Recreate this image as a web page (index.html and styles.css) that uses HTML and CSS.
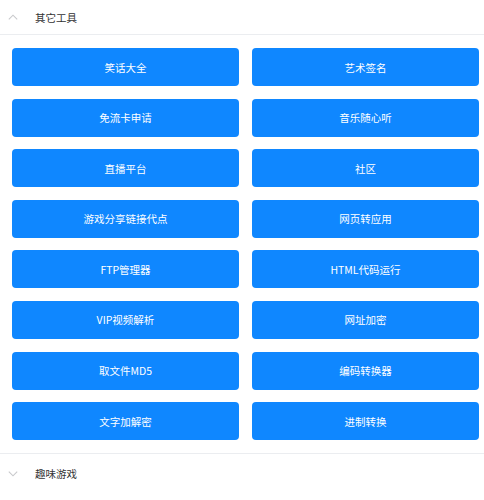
FILE: index.html
```html
<!DOCTYPE html>
<html lang="zh-CN">
<head>
<meta charset="utf-8">
<title>其它工具</title>
<link rel="stylesheet" href="styles.css">
</head>
<body>
<section class="panel">
  <div class="panel-header">
    <svg class="chevron" width="10" height="6" viewBox="0 0 10 6"><path d="M0.8 5.4 L5 1.2 L9.2 5.4" fill="none" stroke="#c8c9cc" stroke-width="1.1"/></svg>
    <span class="panel-title">其它工具</span>
  </div>
  <div class="panel-body">
    <a class="tool-btn">笑话大全</a>
    <a class="tool-btn">艺术签名</a>
    <a class="tool-btn">免流卡申请</a>
    <a class="tool-btn">音乐随心听</a>
    <a class="tool-btn">直播平台</a>
    <a class="tool-btn">社区</a>
    <a class="tool-btn">游戏分享链接代点</a>
    <a class="tool-btn">网页转应用</a>
    <a class="tool-btn">FTP管理器</a>
    <a class="tool-btn">HTML代码运行</a>
    <a class="tool-btn">VIP视频解析</a>
    <a class="tool-btn">网址加密</a>
    <a class="tool-btn">取文件MD5</a>
    <a class="tool-btn">编码转换器</a>
    <a class="tool-btn">文字加解密</a>
    <a class="tool-btn">进制转换</a>
  </div>
</section>
<section class="panel">
  <div class="panel-header panel-header-closed">
    <svg class="chevron" width="10" height="6" viewBox="0 0 10 6"><path d="M0.8 0.6 L5 4.8 L9.2 0.6" fill="none" stroke="#c8c9cc" stroke-width="1.1"/></svg>
    <span class="panel-title">趣味游戏</span>
  </div>
</section>
</body>
</html>
```

FILE: styles.css
```css
html, body {
  margin: 0;
  padding: 0;
  background: #ffffff;
}
body {
  font-family: "Noto Sans CJK SC", "Noto Sans", sans-serif;
}
.panel-header {
  height: 34px;
  display: flex;
  align-items: center;
  padding-left: 8px;
  border-bottom: 1px solid #ebedf0;
}
.panel-header-closed {
  height: 40px;
  border-bottom: none;
}
.chevron {
  display: block;
  flex: none;
}
.panel-title {
  margin-left: 17px;
  font-size: 10.5px;
  color: #323233;
}
.panel-body {
  display: grid;
  grid-template-columns: 1fr 1fr;
  column-gap: 13px;
  row-gap: 12.6px;
  padding: 13px 5px 12.5px 12px;
  border-bottom: 1px solid #ebedf0;
}
.tool-btn {
  height: 38px;
  display: flex;
  align-items: center;
  justify-content: center;
  background: #0f87ff;
  border-radius: 4px;
  color: #ffffff;
  font-size: 10.5px;
  text-decoration: none;
}
```
